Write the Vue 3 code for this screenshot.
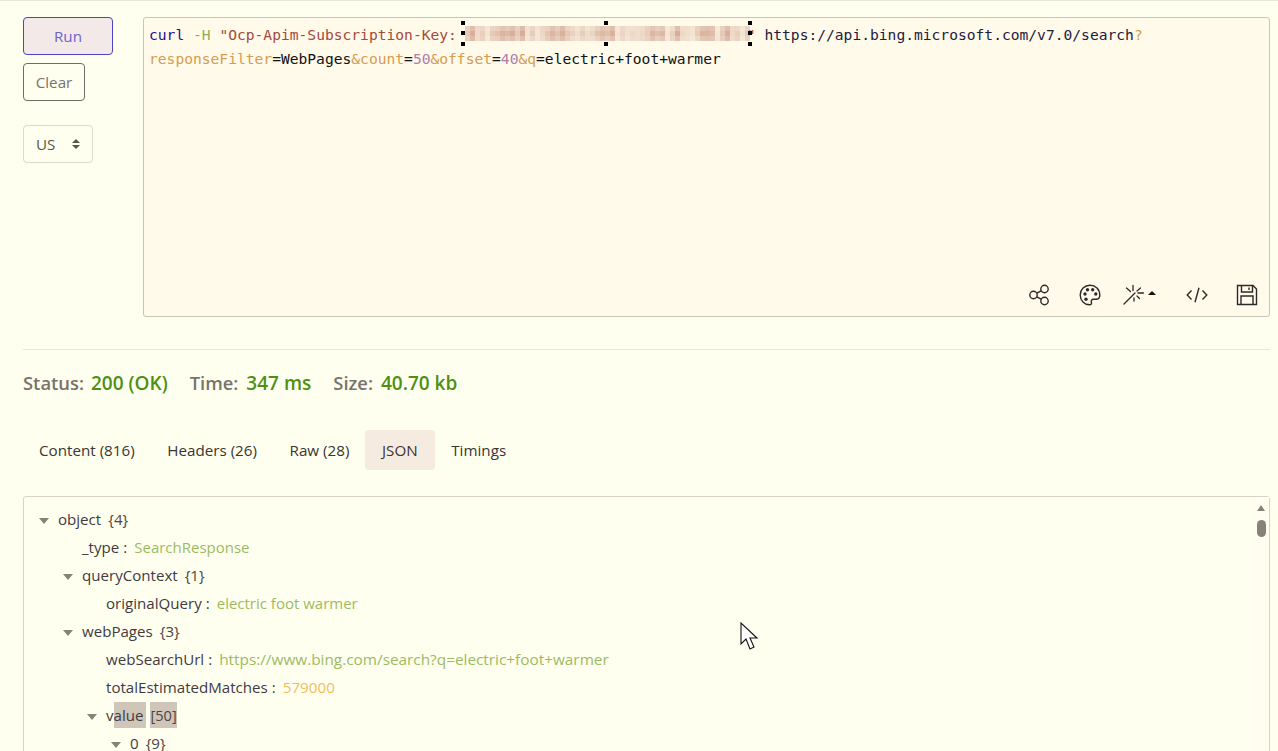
<script setup>
const seed = [0.5,0.2,0.8,0.35,0.1,0.6,0.9,0.3,0.7,0.15,0.45,0.85,0.25,0.55,0.05,0.4,0.75]
const cells = Array.from({ length: 57 * 3 }, (_, i) => {
  const col = i % 57
  const row = Math.floor(i / 57)
  const v = seed[(col * 5 + (col % 3)) % seed.length] * (row === 1 ? 1 : 0.72) + seed[(i * 3) % seed.length] * 0.1
  return `rgba(190,125,105,${(v * 0.55 + 0.1).toFixed(2)})`
})
const rows = [
  { lv: 0, arrow: true, k: 'object', n: '{4}' },
  { lv: 1, k: '_type', v: 'SearchResponse', c: 'str' },
  { lv: 1, arrow: true, k: 'queryContext', n: '{1}' },
  { lv: 2, k: 'originalQuery', v: 'electric foot warmer', c: 'str' },
  { lv: 1, arrow: true, k: 'webPages', n: '{3}' },
  { lv: 2, k: 'webSearchUrl', v: 'https://www.bing.com/search?q=electric+foot+warmer', c: 'str link' },
  { lv: 2, k: 'totalEstimatedMatches', v: '579000', c: 'num' },
  { lv: 2, arrow: true, k: 'value', n: '[50]', hl: true },
  { lv: 3, arrow: true, k: '0', n: '{9}' }
]
const tabs = ['Content (816)', 'Headers (26)', 'Raw (28)', 'JSON', 'Timings']
</script>

<template>
  <div class="page">
    <section class="top">
      <div class="side">
        <button class="btn run">Run</button>
        <button class="btn clear">Clear</button>
        <div class="select">
          <span>US</span>
          <svg width="8" height="12" viewBox="0 0 8 12"><path d="M4 1 8 5H0zM4 11 0 7h8z" fill="#5a5650"/></svg>
        </div>
      </div>
      <div class="editor">
        <div class="code">
          <div class="line"><span class="kw">curl</span> <span class="flag">-H</span> <span class="s">"Ocp-Apim-Subscription-Key:</span><span class="secret"><i v-for="(c, i) in cells" :key="i" :style="{ background: c }"></i><b class="h h1"></b><b class="h h2"></b><b class="h h3"></b><b class="h h4"></b><b class="h h5"></b><b class="h h6"></b><b class="h h7"></b><b class="h h8"></b></span><span class="s">"</span> <span class="url">https://api.bing.microsoft.com/v7.0/search</span><span class="p">?</span></div>
          <div class="line"><span class="p">responseFilter</span>=WebPages<span class="p">&amp;count</span>=<span class="m">50</span><span class="p">&amp;offset</span>=<span class="m">40</span><span class="p">&amp;q</span>=electric+foot+warmer</div>
        </div>
        <div class="tools">
          <svg width="24" height="24" viewBox="0 0 24 24" fill="none" stroke="#2b2b2b" stroke-width="1.4"><circle cx="5.500" cy="12" r="3.700"/><circle cx="16.500" cy="6" r="3.700"/><circle cx="16.500" cy="18" r="3.700"/><path d="M8.800 10.200 13.200 7.800M8.800 13.800l4.400 2.400"/></svg>
          <svg width="24" height="24" viewBox="0 0 24 24" fill="none" stroke="#2b2b2b" stroke-width="1.4"><path d="M12 2.200C6.500 2.200 2.200 6.500 2.200 12s4.300 9.800 9.300 9.800c1.700 0 2.300-1.100 1.900-2.400-.5-1.500.1-3.100 2-3.100h2.600c2.300 0 3.800-1.500 3.800-4C21.800 6 17.500 2.200 12 2.200z"/><g fill="#2b2b2b" stroke="none"><circle cx="7" cy="11" r="1.700"/><circle cx="9.500" cy="6.800" r="1.700"/><circle cx="14.700" cy="6.800" r="1.700"/><circle cx="17.800" cy="11" r="1.700"/><circle cx="8" cy="16.300" r="1.700"/></g></svg>
          <div class="wand">
            <svg width="24" height="24" viewBox="0 0 24 24" fill="none" stroke="#2b2b2b" stroke-width="1.3" stroke-linecap="round"><path d="M3 21 14 10M12 2.500v5M17 10h5.500M5.500 5l4 3.500M16 8l3.500-3M16 13l2.500 2.500M13 15v3"/></svg>
            <svg class="caret" width="8" height="4" viewBox="0 0 8 4"><path d="M4 0 8 4H0z" fill="#111"/></svg>
          </div>
          <svg width="24" height="24" viewBox="0 0 24 24" fill="none" stroke="#2b2b2b" stroke-width="1.4"><path d="M6.500 7.500 2.200 12l4.300 4.500M17.500 7.500l4.300 4.500-4.300 4.500M14 4.800 10 19.200"/></svg>
          <svg width="24" height="24" viewBox="0 0 24 24" fill="none" stroke="#2b2b2b" stroke-width="1.4"><path d="M2.500 2.500h15.500l3.500 3.500v15.500h-19z"/><path d="M6.500 2.500v6.500h11V2.500M6 21.500V13h12v8.500"/><path d="M14 4.500v2.500"/></svg>
        </div>
      </div>
    </section>

    <div class="stats">
      <span class="lbl">Status:</span><span class="val">200 (OK)</span>
      <span class="lbl">Time:</span><span class="val">347 ms</span>
      <span class="lbl">Size:</span><span class="val">40.70 kb</span>
    </div>

    <nav class="tabs">
      <span v-for="t in tabs" :key="t" class="tab" :class="{ active: t === 'JSON' }">{{ t }}</span>
    </nav>

    <div class="tree">
      <div v-for="r in rows" :key="r.k" class="row" :class="'lv' + r.lv">
        <span class="arrow" :class="{ on: r.arrow }"></span>
        <span v-if="r.hl" class="key">v<span class="hl first">alue</span></span>
        <span v-else class="key">{{ r.k }}</span>
        <template v-if="r.n"><span class="count" :class="{ hl: r.hl }">{{ r.n }}</span></template>
        <template v-else><span class="colon">:</span><span :class="r.c">{{ r.v }}</span></template>
      </div>
      <div class="scroll">
        <span class="up"></span>
        <span class="thumb"></span>
      </div>
    </div>

    <svg class="cursor" width="19" height="29" viewBox="0 0 19 29"><path d="M1 1v21l5-5 4 10 4-2-4-9h7z" fill="#fff" stroke="#111" stroke-width="1.100"/></svg>
  </div>
</template>

<style>
html, body { margin: 0; background: #fffff0; }
</style>

<style scoped>
.page {
  position: relative;
  box-sizing: border-box;
  width: 1278px;
  height: 751px;
  overflow: hidden;
  padding: 0 8px 0 23px;
  background: #fffff0;
  border-top: 1px solid #e9e6da;
  font-family: "Open Sans", Roboto, sans-serif;
  color: #3b3532;
}
.top {
  display: flex;
  padding-top: 16px;
  padding-bottom: 32px;
  border-bottom: 1px solid #ebe8da;
}
.side {
  width: 120px;
  flex: none;
  display: flex;
  flex-direction: column;
  align-items: flex-start;
}
.btn {
  box-sizing: border-box;
  height: 38px;
  border-radius: 4px;
  background: transparent;
  font: 15.2px "Open Sans", sans-serif;
  padding: 0;
}
.run { width: 90px; border: 1px solid #4b45c6; background: #f3e9e8; color: #6c63cf; }
.clear { width: 62px; margin-top: 8px; border: 1px solid #6f6c68; color: #77736c; }
.select {
  box-sizing: border-box;
  margin-top: 24px;
  width: 70px;
  height: 38px;
  border: 1px solid #ddd8cc;
  border-radius: 4px;
  display: flex;
  align-items: center;
  justify-content: space-between;
  padding: 0 12px;
  font-size: 15.2px;
  color: #5a5650;
}
.editor {
  box-sizing: border-box;
  flex: 1;
  height: 300px;
  background: #fffaea;
  border: 1px solid #c9c5b6;
  border-radius: 3px;
  display: flex;
  flex-direction: column;
  justify-content: space-between;
  padding: 5px 0 9px 5px;
}
.code { font: 14.62px/24px "DejaVu Sans Mono", monospace; color: #111; }
.line { height: 24px; white-space: pre; }
.kw { color: #2b0a9c; }
.flag { color: #8fae58; }
.s { color: #a34a3c; }
.url { color: #1c1c40; }
.p { color: #d39d52; }
.m { color: #b07ca8; }
.secret {
  position: relative;
  z-index: 1;
  display: inline-grid;
  grid-template-columns: repeat(57, 5px);
  grid-auto-rows: 5px;
  width: 285px;
  height: 15px;
  margin: 3px -3px 0 8px;
  vertical-align: top;
}
.secret i { display: block; }
.h { position: absolute; width: 4px; height: 4px; background: #000; }
.h1 { left: -4px; top: -5px; }
.h2 { left: 139px; top: -5px; }
.h3 { left: 283px; top: -5px; }
.h4 { left: -4px; top: 5px; }
.h5 { left: 283px; top: 5px; }
.h6 { left: -4px; top: 16px; }
.h7 { left: 139px; top: 16px; }
.h8 { left: 283px; top: 16px; }
.tools {
  display: flex;
  justify-content: flex-end;
  align-items: center;
  gap: 26px;
  padding-right: 10px;
}
.tools svg { display: block; }
.wand { display: flex; align-items: flex-start; width: 38px; margin-left: -7px; }
.wand .caret { margin-top: 8px; margin-left: 3px; }
.stats {
  display: flex;
  align-items: baseline;
  height: 26px;
  margin-top: 20px;
  font-size: 18.4px;
  font-weight: 600;
}
.lbl { color: #77736c; margin-right: 8px; }
.lbl:first-child { margin-right: 7px; }
.val { color: #4f8f14; margin-right: 22px; font-size: 19px; }
.tabs { display: flex; margin-top: 34px; }
.tab {
  height: 40px;
  line-height: 41px;
  padding: 0 16.300px;
  font-size: 15.2px;
  border-radius: 4px;
  color: #3b3532;
}
.tab:first-child { padding-left: 16px; }
.tab.active { background: #f5ebe0; padding: 0 17.300px; margin-left: -1px; }
.tree {
  position: relative;
  box-sizing: border-box;
  margin-top: 26px;
  height: 300px;
  padding-top: 8px;
  border: 1px solid #d8d3c6;
  border-radius: 3px;
  font-size: 15.1px;
}
.row { display: flex; align-items: center; height: 28px; white-space: pre; }
.lv0 { padding-left: 15px; }
.lv1 { padding-left: 39px; }
.lv2 { padding-left: 63px; }
.lv3 { padding-left: 87px; }
.arrow { width: 10px; height: 0; margin-right: 9px; flex: none; }
.arrow.on { border-top: 6px solid #86827a; border-left: 5px solid transparent; border-right: 5px solid transparent; width: 0; margin-top: 3px; }
.key { color: #3f3a3f; }
.count { margin-left: 7px; color: #4a4540; }
.hl { background: #cfc6b9; padding: 3px 0; }
.hl.first { padding-right: 3px; }
.count.hl { margin-left: 4px; padding: 3px 0; font-size: 14.6px; }
.colon { margin: 0 7px 0 4px; color: #3f3a3f; }
.str { color: #9bbb62; font-size: 15px; }
.str.link { font-size: 15.35px; }
.num { color: #f3bd5e; font-size: 15.2px; }
.scroll {
  position: absolute;
  top: 0;
  right: 0;
  bottom: 0;
  width: 16px;
  background: #fffdf0;
}
.up {
  position: absolute;
  left: 4px;
  top: 8px;
  border-bottom: 6px solid #86827a;
  border-left: 4.500px solid transparent;
  border-right: 4.500px solid transparent;
}
.thumb {
  position: absolute;
  left: 4px;
  top: 23px;
  width: 9px;
  height: 17px;
  border-radius: 5px;
  background: #86827a;
}
.cursor { position: absolute; left: 740px; top: 621px; }
</style>
